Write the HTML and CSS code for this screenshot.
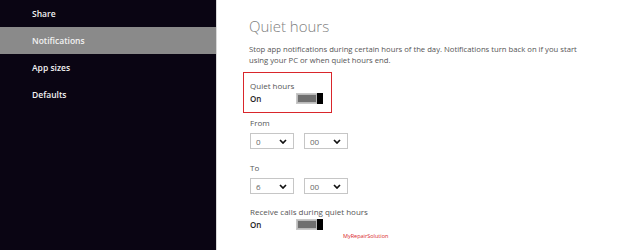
FILE: index.html
```html
<!DOCTYPE html>
<html>
<head>
<meta charset="utf-8">
<link rel="stylesheet" href="styles.css">
</head>
<body>
<div class="app">
  <nav class="sidebar">
    <div class="nav-item">Share</div>
    <div class="nav-item active">Notifications</div>
    <div class="nav-item">App sizes</div>
    <div class="nav-item">Defaults</div>
  </nav>
  <main class="content">
    <h1 class="title">Quiet hours</h1>
    <p class="desc">Stop app notifications during certain hours of the day. Notifications turn back on if you start using your PC or when quiet hours end.</p>
    <div class="setting highlighted">
      <div class="label">Quiet hours</div>
      <div class="toggle-row">
        <span class="state">On</span>
        <span class="toggle"><span class="track"></span><span class="thumb"></span></span>
      </div>
    </div>
    <div class="group">
      <div class="label">From</div>
      <div class="selects">
        <div class="select"><span>0</span><svg class="chev" viewBox="0 0 8 5" width="8" height="5"><path d="M1 1 L4 4 L7 1" fill="none" stroke="#111" stroke-width="1.7"/></svg></div>
        <div class="select"><span>00</span><svg class="chev" viewBox="0 0 8 5" width="8" height="5"><path d="M1 1 L4 4 L7 1" fill="none" stroke="#111" stroke-width="1.7"/></svg></div>
      </div>
    </div>
    <div class="group">
      <div class="label">To</div>
      <div class="selects">
        <div class="select"><span>6</span><svg class="chev" viewBox="0 0 8 5" width="8" height="5"><path d="M1 1 L4 4 L7 1" fill="none" stroke="#111" stroke-width="1.7"/></svg></div>
        <div class="select"><span>00</span><svg class="chev" viewBox="0 0 8 5" width="8" height="5"><path d="M1 1 L4 4 L7 1" fill="none" stroke="#111" stroke-width="1.7"/></svg></div>
      </div>
    </div>
    <div class="setting calls">
      <div class="label">Receive calls during quiet hours</div>
      <div class="toggle-row">
        <span class="state">On</span>
        <span class="toggle"><span class="track"></span><span class="thumb"></span></span>
        <span class="watermark">MyRepairSolution</span>
      </div>
    </div>
  </main>
</div>
</body>
</html>
```
FILE: styles.css
```css
* { box-sizing: border-box; }
html, body { margin: 0; padding: 0; }
body {
  width: 640px;
  height: 250px;
  overflow: hidden;
  font-family: "Open Sans", "Noto Sans", sans-serif;
  background: #fff;
}
.app {
  display: flex;
  height: 250px;
}
.sidebar {
  width: 217px;
  flex: none;
  background: #0a0513;
  border-right: 1px solid #d8d8d8;
}
.nav-item {
  height: 27px;
  line-height: 27px;
  padding-left: 32px;
  color: #f2f2f2;
  font-size: 8.5px;
  font-weight: 600;
}
.nav-item.active {
  background: #8a8a8a;
}
.content {
  flex: 1;
  padding-left: 26px;
  padding-top: 16px;
}
.title {
  margin: 0 0 0 6px;
  font-size: 15px;
  font-weight: 300;
  color: #808080;
  line-height: 20px;
}
.desc {
  margin: 8px 0 0 6px;
  width: 330px;
  font-size: 7.7px;
  line-height: 11px;
  color: #555;
}
.label {
  font-size: 8px;
  color: #555;
  line-height: 12px;
}
.setting {
  margin-top: 6px;
  padding: 7px 0 8px 6px;
}
.setting.highlighted {
  width: 89px;
  border: 1px solid #d9262b;
}
.toggle-row {
  position: relative;
  display: flex;
  align-items: center;
  margin-top: 1px;
}
.state {
  font-size: 8px;
  font-weight: 600;
  color: #222;
  width: 46px;
}
.toggle {
  position: relative;
  display: block;
  width: 27px;
  height: 11px;
  border: 1px solid #c8c8c8;
  background: #b9b9b9;
}
.track {
  position: absolute;
  left: 1px;
  top: 1px;
  right: 6px;
  bottom: 1px;
  background: #6f6f6f;
}
.thumb {
  position: absolute;
  right: -1px;
  top: -1px;
  width: 6px;
  height: 11px;
  background: #000;
}
.group {
  margin-top: 4px;
  margin-left: 7px;
}
.selects {
  display: flex;
  gap: 10px;
  margin-top: 4px;
}
.select {
  width: 44px;
  height: 16px;
  border: 1px solid #c6c6c6;
  display: flex;
  align-items: center;
  justify-content: space-between;
  padding: 0 6px 0 5px;
  font-size: 8px;
  color: #666;
}
.chev { display: block; }
.group + .group { margin-top: 13px; }
.setting.calls {
  margin-top: 6px;
  padding-top: 6px;
  padding-left: 7px;
}
.calls .toggle-row { margin-top: 1px; }
.watermark {
  position: absolute;
  left: 93px;
  top: 13px;
  font-size: 5.5px;
  color: #d9262b;
  white-space: nowrap;
}
```
